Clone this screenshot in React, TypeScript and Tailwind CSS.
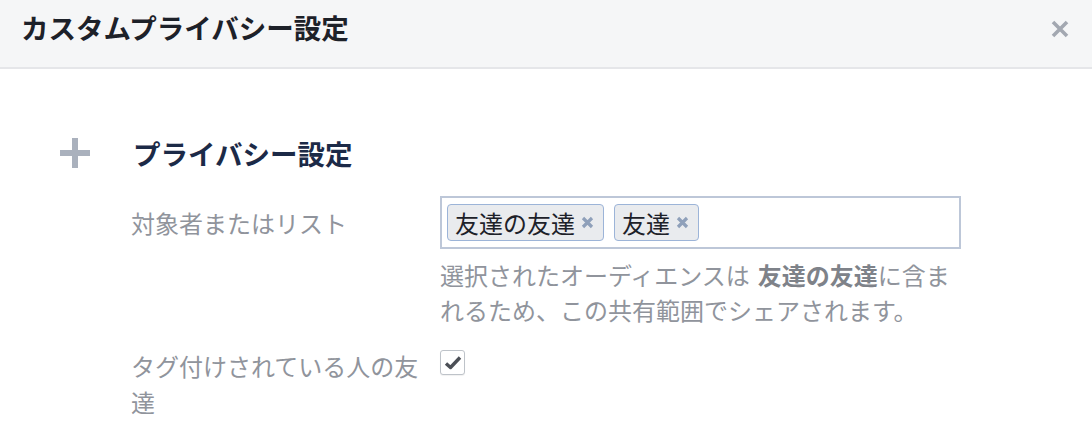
import React from "react";

const jp = "font-['Noto_Sans_CJK_JP',sans-serif]";

const CloseIcon = () => (
  <svg width="20" height="20" viewBox="0 0 20 20">
    <path d="M3 3 L17 17 M17 3 L3 17" stroke="#a3a8b1" strokeWidth="3.6" strokeLinecap="butt" />
  </svg>
);

const PlusIcon = () => (
  <svg width="30" height="30" viewBox="0 0 30 30">
    <rect x="12" y="0" width="6" height="30" fill="#aab1bd" />
    <rect x="0" y="12" width="30" height="6" fill="#aab1bd" />
  </svg>
);

const TokenX = () => (
  <svg width="13" height="13" viewBox="0 0 13 13">
    <path d="M2 2 L11 11 M11 2 L2 11" stroke="#8fa0ba" strokeWidth="3.2" />
  </svg>
);

const Token = ({ label }: { label: string }) => (
  <div className="flex items-center gap-[6px] h-[37px] pl-[7px] pr-[9px] bg-[#e9ebee] border-[1.5px] border-[#9cb4d8] rounded-[4px]">
    <span className="text-[24px] leading-none text-[#1d2129]">{label}</span>
    <TokenX />
  </div>
);

const App = () => {
  const tokens = ["友達の友達", "友達"];

  return (
    <div className={`w-[1092px] h-[424px] bg-white overflow-hidden ${jp}`}>
      <div className="h-[69px] bg-[#f5f6f7] border-b-2 border-[#e5e6e9] flex items-start justify-between pl-[21px] pr-[22px]">
        <h1 className="mt-[11px] text-[27.5px] leading-[32px] font-bold text-[#1d2129]">
          カスタムプライバシー設定
        </h1>
        <div className="mt-[19px]">
          <CloseIcon />
        </div>
      </div>

      <div className="pl-[60px]">
        <div className="flex items-center h-[36px] mt-[66px]">
          <PlusIcon />
          <h2 className="ml-[43px] text-[27.5px] leading-[36px] font-bold text-[#1c2a47]">
            プライバシー設定
          </h2>
        </div>

        <div className="pl-[71px] mt-[25px]">
          <div className="flex">
            <div className="w-[309px] pt-[10px] text-[24px] leading-[34px] text-[#90949c]">
              対象者またはリスト
            </div>
            <div className="w-[521px]">
              <div className="h-[53px] border-2 border-[#bdc7d8] flex items-center gap-[10px] pl-[5px]">
                {tokens.map((t) => (
                  <Token key={t} label={t} />
                ))}
              </div>
              <p className="mt-[8px] text-[24px] leading-[35px] text-[#90949c]">
                選択されたオーディエンスは<b className="ml-[8px] font-bold text-[#7e8289]">友達の友達</b>に含まれるため、この共有範囲でシェアされます。
              </p>
            </div>
          </div>

          <div className="flex mt-[21px]">
            <div className="w-[309px] text-[24px] leading-[36px] text-[#90949c]">
              タグ付けされている人の友達
            </div>
            <div className="pt-[2px]">
              <div className="w-[25px] h-[25px] bg-white border border-[#bec3c9] rounded-[3px] shadow-[0_1px_1px_rgba(0,0,0,0.06)] flex items-center justify-center">
                <svg width="18" height="16" viewBox="0 0 18 16">
                  <path d="M2 8.5 L6.5 12.5 L16 2.5" fill="none" stroke="#4b4f56" strokeWidth="3.4" strokeLinejoin="round" />
                </svg>
              </div>
            </div>
          </div>
        </div>
      </div>
    </div>
  );
};

export default App;
